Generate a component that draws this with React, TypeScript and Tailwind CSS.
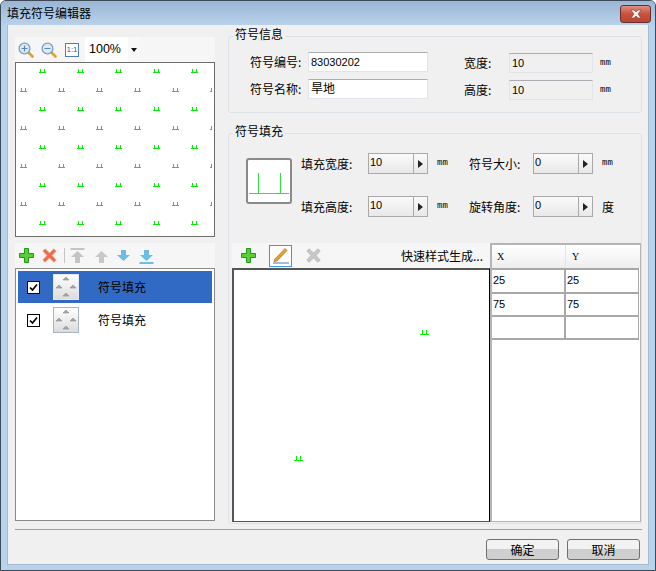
import React from "react"

const cjk = "font-['Noto_Sans_CJK_SC','Liberation_Sans',sans-serif]"

// green mark used in the fill pattern
function Mark({ x, y }: { x: number; y: number }) {
  return <path d={`M${x} ${y + 3.5}h7M${x + 1.5} ${y}v3M${x + 5.5} ${y}v3`} stroke="#00f000" strokeWidth="1" fill="none" shapeRendering="crispEdges" />
}

// same mark at the larger size of the editing canvas
function BigMark({ x, y }: { x: number; y: number }) {
  return <path d={`M${x} ${y + 4.5}h9M${x + 2.5} ${y}v4M${x + 6.5} ${y}v4`} stroke="#00f000" strokeWidth="1" fill="none" shapeRendering="crispEdges" />
}

function Pattern() {
  const marks: { x: number; y: number }[] = []
  for (let r = 0; r < 9; r++) {
    for (let c = 0; c < 6; c++) {
      marks.push({ x: (r % 2 === 0 ? 23 : 4) + c * 38, y: 6 + r * 19 })
    }
  }
  return (
    <svg width="196" height="173" className="block">
      {marks.map((m, i) => <Mark key={i} x={m.x} y={m.y} />)}
    </svg>
  )
}

function Magnifier({ minus }: { minus?: boolean }) {
  return (
    <svg width="16" height="16" viewBox="0 0 16 16">
      <path d="M10 10l4.5 4.5" stroke="#e0a030" strokeWidth="2.6" strokeLinecap="round" />
      <circle cx="6.5" cy="6.5" r="5.4" fill="#dceaf8" stroke="#7f9fc0" strokeWidth="1.3" />
      <path d={minus ? "M3.5 6.5h6" : "M3.5 6.5h6M6.5 3.5v6"} stroke="#5f86b0" strokeWidth="1.2" />
    </svg>
  )
}

function Plus() {
  return (
    <svg width="15" height="15" viewBox="0 0 15 15">
      <path d="M5.5 .5h4v5h5v4h-5v5h-4v-5h-5v-4h5z" fill="#56cf3a" stroke="#1f9a12" strokeWidth="1" />
    </svg>
  )
}

function Cross({ gray }: { gray?: boolean }) {
  return (
    <svg width="15" height="15" viewBox="0 0 15 15">
      <path
        d="M3 .8L7.5 5 12 .8l2.2 2.2L10 7.5l4.2 4.5L12 14.2 7.5 10 3 14.2.8 12 5 7.5.8 3z"
        fill={gray ? "#c8c8c8" : "#f2694a"}
        stroke={gray ? "#b4b4b4" : "#e8a090"}
        strokeWidth="0.8"
      />
    </svg>
  )
}

function Arrow({ down, bar, color }: { down?: boolean; bar?: boolean; color: string }) {
  return (
    <svg width="15" height="18" viewBox="0 0 15 18">
      {bar && <rect x="0.5" y={down ? 15 : 1} width="14" height="2" fill={color} />}
      {down ? (
        <path d="M5 3h5v5h4l-6.5 6L1 8h4z" fill={color} />
      ) : (
        <path d="M7.5 4l6.5 6h-4v6H5v-6H1z" fill={color} />
      )}
    </svg>
  )
}

function Thumb({ active }: { active?: boolean }) {
  return (
    <div className={`w-[26px] h-[26px] border bg-gradient-to-b from-white to-[#dcdcdc] flex items-center justify-center ${active ? "border-[#e4e8f0]" : "border-[#a8b4c4]"}`}>
      <svg width="22" height="22" viewBox="0 0 22 22">
        <path d="M8 4l3-3 3 3zM1 12l3-3 3 3zM15 12l3-3 3 3zM8 20l3-3 3 3z" fill="#a8a8a8" stroke="#8c8c8c" strokeWidth="0.6" />
      </svg>
    </div>
  )
}

function Check() {
  return (
    <div className="w-[13px] h-[13px] border border-black bg-white flex items-center justify-center">
      <svg width="9" height="9" viewBox="0 0 9 9">
        <path d="M1 4.5l2.5 2.5L8 1.5" stroke="#000" strokeWidth="1.7" fill="none" />
      </svg>
    </div>
  )
}

function ListRow({ active }: { active?: boolean }) {
  return (
    <div className={`h-8 flex items-center pl-[9px] ${active ? "bg-[#316ac5]" : "bg-white"}`}>
      <Check />
      <div className="ml-[13px]"><Thumb active={active} /></div>
      <span className="ml-[19px] text-[12px] text-black">符号填充</span>
    </div>
  )
}

function Spin({ value }: { value: string }) {
  return (
    <div className="w-[60px] h-[21px] border border-[#a9a9a9] flex bg-gradient-to-b from-[#fafafa] to-[#e8e8e8]">
      <span className="flex-1 pl-px text-[11px] leading-[17px] font-['Liberation_Sans',sans-serif] text-black">{value}</span>
      <span className="w-[14px] border-l border-[#a9a9a9] flex items-center justify-center">
        <svg width="5" height="8" viewBox="0 0 5 8"><path d="M0 0l5 4-5 4z" fill="#222" /></svg>
      </span>
    </div>
  )
}

function Field({ value, disabled, w, size = "text-[11px]" }: { value: string; disabled?: boolean; w: string; size?: string }) {
  return (
    <div className={`${w} ${size} h-5 border border-[#dfe5eb] border-t-[#abadb3] pl-[2px] leading-[18px] text-black font-['Liberation_Sans','Noto_Sans_CJK_SC',sans-serif] ${disabled ? "bg-[#f0f0f0]" : "bg-white"}`}>
      {value}
    </div>
  )
}

function Unit() {
  return <span className="block w-[12px] text-[9px] leading-none text-black font-['Liberation_Mono',monospace]">mm</span>
}

function Group({ title, className, children }: { title: string; className: string; children: React.ReactNode }) {
  return (
    <div className={`relative border border-[#dce2e8] rounded-[3px] ${className}`}>
      <span className="absolute left-[4px] -top-[11px] bg-[#f0f0f0] px-[2px] text-[12px] leading-[16px] text-black">{title}</span>
      {children}
    </div>
  )
}

export default function App() {
  return (
    <div className={`w-[656px] h-[571px] flex flex-col bg-[#b9d3ec] border border-[#3c4a58] rounded-t-[6px] overflow-hidden ${cjk}`}>
      {/* title bar */}
      <div className="h-[24px] shrink-0 bg-gradient-to-b from-[#9ab6d4] to-[#b9d1ea] flex items-center justify-between pl-[6px] pr-[4px]">
        <span className="text-[12px] text-black">填充符号编辑器</span>
        <button className="w-[31px] h-[18px] mt-[2px] rounded-[3px] border border-[#6a2f2f] bg-gradient-to-b from-[#dc8f80] via-[#c9503c] to-[#b84634] flex items-center justify-center">
          <svg width="14" height="10" viewBox="0 0 14 10">
            <path d="M2 1h3l2 2 2-2h3L9 5l3 4H9L7 7 5 9H2l3-4z" fill="#f4f4f4" stroke="#7a3a30" strokeWidth="0.6" />
          </svg>
        </button>
      </div>

      {/* dialog body */}
      <div className="flex-1 mx-[6px] mb-[5px] bg-[#f0f0f0] border border-[#a8bcd0] border-t-0 flex flex-col pl-[7px] pr-[5px]">
        <div className="flex gap-[13px] pt-[11px]">
          {/* left column */}
          <div className="w-[200px] shrink-0 flex flex-col pt-px">
            <div className="h-[25px] bg-[#f6f6f6] flex items-center pl-[3px]">
              <Magnifier />
              <div className="ml-[7px]"><Magnifier minus /></div>
              <span className="ml-[8px] w-[14px] h-[14px] border border-[#4f7fb8] text-[8px] leading-[12px] text-center text-[#2f5f98] font-['Liberation_Sans',sans-serif] bg-white">1:1</span>
              <span className="ml-[6px] w-[43px] pl-[4px] bg-white h-full text-[12.5px] leading-[25px] font-['Liberation_Sans',sans-serif] text-black">100%</span>
              <span className="w-[12px] h-full bg-[#f8f8f8] flex items-center justify-center">
                <svg width="6" height="4" viewBox="0 0 6 4"><path d="M0 0h6L3 4z" fill="#111" /></svg>
              </span>
            </div>
            <div className="h-[175px] border border-[#6d6d6d] bg-white overflow-hidden">
              <Pattern />
            </div>

            <div className="mt-[6px] h-[25px] bg-[#f6f6f6] flex items-center pl-[4px]">
              <Plus />
              <div className="ml-[8px]"><Cross /></div>
              <div className="ml-[7px] w-px h-[15px] bg-[#c4c4c4]" />
              <div className="ml-[5px]"><Arrow bar color="#c4c4c4" /></div>
              <div className="ml-[9px]"><Arrow color="#c8c8c8" /></div>
              <div className="ml-[7px]"><Arrow down color="#6cbce4" /></div>
              <div className="ml-[8px]"><Arrow down bar color="#6cbce4" /></div>
            </div>
            <div className="h-[253px] border border-[#8a8a8a] bg-white p-[2px]">
              <ListRow active />
              <div className="mt-px"><ListRow /></div>
            </div>
          </div>

          {/* right column */}
          <div className="w-[414px] shrink-0 flex flex-col">
            <Group title="符号信息" className="h-[77px] flex items-start pt-[15px] pl-[21px]">
              <div className="flex flex-col gap-[7px] text-[12px] text-black">
                <div className="flex items-center">
                  <span className="w-[58px]">符号编号:</span>
                  <Field value="83030202" w="w-[120px]" />
                </div>
                <div className="flex items-center">
                  <span className="w-[58px]">符号名称:</span>
                  <Field value="旱地" w="w-[120px]" size="text-[12px]" />
                </div>
              </div>
              <div className="ml-[36px] mt-px flex flex-col gap-[7px] text-[12px] text-black">
                <div className="flex items-center">
                  <span className="w-[45px]">宽度:</span>
                  <Field value="10" disabled w="w-[84px]" />
                  <span className="ml-[7px]"><Unit /></span>
                </div>
                <div className="flex items-center">
                  <span className="w-[45px]">高度:</span>
                  <Field value="10" disabled w="w-[84px]" />
                  <span className="ml-[7px]"><Unit /></span>
                </div>
              </div>
            </Group>

            <Group title="符号填充" className="mt-[20px] h-[391px] flex flex-col pt-[19px] pl-[3px] pb-[1px]">
              <div className="flex pl-[14px] h-[90px] shrink-0">
                <div className="w-[46px] h-[46px] mt-[5px] border-2 border-[#8a8a8a] rounded-[3px] bg-white">
                  <svg width="42" height="42" viewBox="0 0 42 42" className="block">
                    <path d="M1 33.5h40M10.5 13v20M32.5 13v20" stroke="#30e040" strokeWidth="1" fill="none" />
                  </svg>
                </div>
                <div className="ml-[9px] flex flex-col gap-[22px] text-[12px] text-black">
                  <div className="flex items-center h-[21px]">
                    <span className="w-[67px]">填充宽度:</span>
                    <Spin value="10" />
                    <span className="ml-[9px]"><Unit /></span>
                  </div>
                  <div className="flex items-center h-[21px]">
                    <span className="w-[67px]">填充高度:</span>
                    <Spin value="10" />
                    <span className="ml-[9px]"><Unit /></span>
                  </div>
                </div>
                <div className="ml-[20px] flex flex-col gap-[22px] text-[12px] text-black">
                  <div className="flex items-center h-[21px]">
                    <span className="w-[64px]">符号大小:</span>
                    <Spin value="0" />
                    <span className="ml-[9px]"><Unit /></span>
                  </div>
                  <div className="flex items-center h-[21px]">
                    <span className="w-[64px]">旋转角度:</span>
                    <Spin value="0" />
                    <span className="ml-[9px]">度</span>
                  </div>
                </div>
              </div>

              <div className="flex flex-1 min-h-0">
                <div className="w-[258px] flex flex-col shrink-0">
                  <div className="h-[25px] bg-[#f6f6f6] flex items-center pl-[9px] pr-[7px]">
                    <Plus />
                    <div className="ml-[13px] w-[23px] h-[22px] border border-[#3f94e8] bg-white flex items-center justify-center">
                      <svg width="18" height="17" viewBox="0 0 18 17">
                        <path d="M3 12L13 1.5l2 2L5 14l-3 .5z" fill="#e8a030" stroke="#b06c18" strokeWidth="0.7" />
                        <path d="M1 16h16" stroke="#5f6fa8" strokeWidth="1" />
                      </svg>
                    </div>
                    <div className="ml-[14px]"><Cross gray /></div>
                    <span className="ml-auto text-[12px] text-black">快速样式生成...</span>
                  </div>
                  <div className="flex-1 border-2 border-r border-b border-t-[#555] border-l-[#555] border-r-black border-b-[#555] bg-white">
                    <svg width="250" height="250" className="block">
                      <BigMark x={186} y={60} />
                      <BigMark x={60} y={186} />
                    </svg>
                  </div>
                </div>
                <div className="flex-1 border-l-2 border-t-2 border-r border-b border-[#b4b4b4] bg-white flex flex-col text-[11px] text-black font-['Liberation_Sans',sans-serif]">
                  <div className="flex h-[23px] bg-gradient-to-b from-white to-[#eeeeee] font-['Liberation_Serif',serif] text-[10px] leading-[23px]">
                    <span className="w-[74px] pl-[5px] border-r border-[#e4e4e4]">X</span>
                    <span className="pl-[6px]">Y</span>
                  </div>
                  <div className="pr-px">
                    {["25", "75", ""].map(v => (
                      <div key={v} className="flex h-[23px] first:h-[24px] border-t-2 first:border-t-2 border-[#a8a8a8] last:h-[25px] last:border-b-2 leading-[21px]">
                        <span className="w-[74px] pl-px border-r-2 border-[#a8a8a8]">{v}</span>
                        <span className="flex-1 pl-px border-r border-[#a8a8a8]">{v}</span>
                      </div>
                    ))}
                  </div>
                </div>
              </div>
            </Group>
          </div>
        </div>

        {/* bottom buttons */}
        <div className="mt-[5px] border-t border-[#a0a0a0] flex justify-end gap-2 pt-[9px] pr-[2px] mr-px">
          {["确定", "取消"].map(t => (
            <button key={t} className="w-[73px] h-[21px] rounded-[3px] border border-[#707070] bg-gradient-to-b from-[#f2f2f2] from-50% to-[#cfcfcf] to-50% text-[12px] leading-[19px] text-black">
              {t}
            </button>
          ))}
        </div>
      </div>
    </div>
  )
}
